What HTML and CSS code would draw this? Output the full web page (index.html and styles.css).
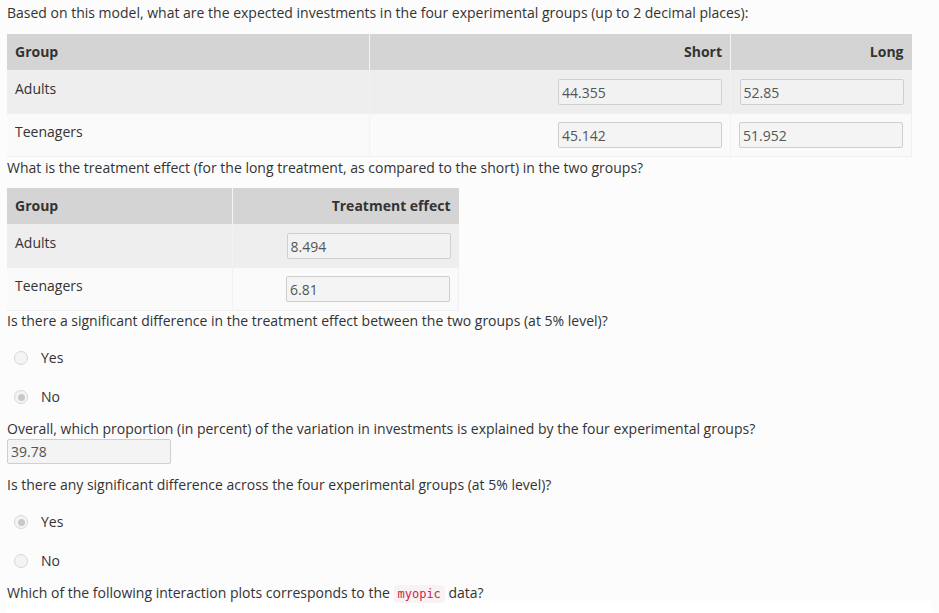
FILE: index.html
```html
<!DOCTYPE html>
<html>
<head>
<meta charset="utf-8">
<link rel="stylesheet" href="styles.css">
</head>
<body>
<div class="page">
  <p class="q q-first">Based on this model, what are the expected investments in the four experimental groups (up to 2 decimal places):</p>
  <table class="grid grid-wide">
    <thead>
      <tr><th class="c-group">Group</th><th class="c-short num">Short</th><th class="c-long num">Long</th></tr>
    </thead>
    <tbody>
      <tr class="odd"><td>Adults</td><td class="num"><input class="field" type="text" value="44.355" disabled></td><td class="num"><input class="field" type="text" value="52.85" disabled></td></tr>
      <tr class="even"><td>Teenagers</td><td class="num"><input class="field" type="text" value="45.142" disabled></td><td class="num"><input class="field" type="text" value="51.952" disabled></td></tr>
    </tbody>
  </table>
  <p class="q">What is the treatment effect (for the long treatment, as compared to the short) in the two groups?</p>
  <table class="grid grid-narrow">
    <thead>
      <tr><th class="c-half">Group</th><th class="c-half num">Treatment effect</th></tr>
    </thead>
    <tbody>
      <tr class="odd"><td>Adults</td><td class="num"><input class="field" type="text" value="8.494" disabled></td></tr>
      <tr class="even"><td>Teenagers</td><td class="num"><input class="field" type="text" value="6.81" disabled></td></tr>
    </tbody>
  </table>
  <p class="q">Is there a significant difference in the treatment effect between the two groups (at 5% level)?</p>
  <div class="radios">
    <label class="radio"><span class="dot"></span><span>Yes</span></label>
    <label class="radio"><span class="dot dot-on"></span><span>No</span></label>
  </div>
  <p class="q">Overall, which proportion (in percent) of the variation in investments is explained by the four experimental groups?</p>
  <input class="field field-solo" type="text" value="39.78" disabled>
  <p class="q q-after-input">Is there any significant difference across the four experimental groups (at 5% level)?</p>
  <div class="radios">
    <label class="radio"><span class="dot dot-on"></span><span>Yes</span></label>
    <label class="radio"><span class="dot"></span><span>No</span></label>
  </div>
  <p class="q">Which of the following interaction plots corresponds to the <code class="code">myopic</code> data?</p>
  <div class="plot"></div>
</div>
</body>
</html>
```

FILE: styles.css
```css
html, body {
  margin: 0;
  padding: 0;
  background: #fcfcfc;
}
body {
  font-family: "Open Sans", "Liberation Sans", sans-serif;
  font-size: 14px;
  line-height: 20px;
  color: #333333;
}
.page {
  padding: 0 7px;
  overflow: hidden;
}
.q {
  margin: 0;
}
.q-first {
  margin-top: 3px;
  margin-bottom: 11px;
}
.grid {
  border-collapse: collapse;
  border-spacing: 0;
  margin-bottom: 0;
}
.grid-wide {
  width: 905px;
  margin-bottom: 1px;
}
.grid + .q {
  margin-bottom: 10px;
}
.grid-narrow {
  width: 452px;
}
.c-group { width: 363px; }
.c-short { width: 362px; }
.c-long { width: 180px; }
.c-half { width: 226px; }
.grid th, .grid td {
  padding: 8px;
  vertical-align: top;
  text-align: left;
  box-sizing: border-box;
}
.grid th {
  background: #d4d4d4;
  font-weight: bold;
  border-left: 1px solid #f5f5f5;
  border-bottom: 1px solid #f0f0f0;
}
.grid th:first-child, .grid td:first-child {
  border-left: 0;
}
.grid td {
  border-left: 1px solid #f2f2f2;
}
.grid .num {
  text-align: right;
}
.odd td {
  background: #eeeeee;
  height: 42px;
}
.even td {
  background: #fafafa;
  height: 43px;
  border-top: 1px solid #f0f0f0;
  border-bottom: 1px solid #f0f0f0;
}
.even td:last-child {
  border-right: 1px solid #f0f0f0;
}
.field {
  width: 164px;
  height: 26px;
  box-sizing: border-box;
  border: 1px solid #cfcfcf;
  border-radius: 2px;
  background: #f4f4f4;
  font-family: "Open Sans", "Liberation Sans", sans-serif;
  font-size: 14px;
  color: #555555;
  padding: 0 3px;
  margin: 0;
  display: inline-block;
  vertical-align: top;
}
.odd .field {
  background: #f2f2f2;
}
.field-solo {
  display: block;
  width: 164px;
  height: 25px;
}
.q-after-input {
  margin-top: 11px;
}
.radios {
  margin-top: 17px;
  margin-bottom: 12px;
  display: flex;
  flex-direction: column;
  gap: 19px;
}
.radio {
  display: flex;
  align-items: center;
  height: 20px;
  padding-left: 7px;
}
.dot {
  width: 14px;
  height: 14px;
  box-sizing: border-box;
  border: 1px solid #d6d6d6;
  border-radius: 50%;
  background: #f4f4f4;
  margin-right: 13px;
  position: relative;
}
.dot-on::after {
  content: "";
  position: absolute;
  left: 2.5px;
  top: 2.5px;
  width: 7px;
  height: 7px;
  border-radius: 50%;
  background: #c8c8c8;
}
.code {
  font-family: "DejaVu Sans Mono", "Liberation Mono", monospace;
  font-size: 12px;
  color: #c7254e;
  background: #f9f2f4;
  padding: 2px 4px;
  border-radius: 4px;
}
.plot {
  margin-top: -3px;
  height: 40px;
  background: #ffffff;
}
```
